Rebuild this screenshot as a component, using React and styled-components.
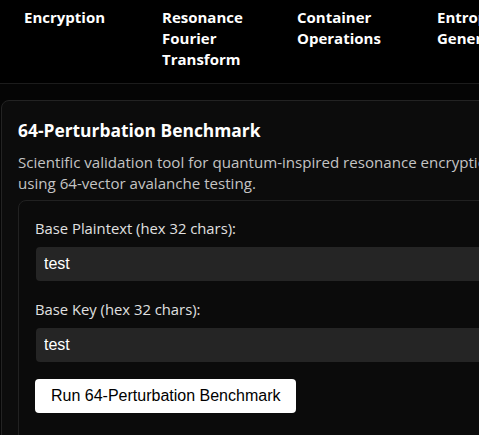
import React, { useState } from 'react';
import styled, { createGlobalStyle } from 'styled-components';

const GlobalStyle = createGlobalStyle`
    body {
        margin: 0;
        background-color: #050505;
        color: #fff;
        font-family: "Open Sans", "Noto Sans", sans-serif;
        overflow: hidden;
    }
`;

const Page = styled.div`
    width: 540px;
`;

const Nav = styled.nav`
    display: grid;
    grid-template-columns: 138px 135px 140px 140px;
    padding: 7px 0 13px 24px;
    background-color: #000;
    border-bottom: 1px solid #1c1c1c;
`;

const NavLink = styled.a`
    width: 110px;
    font-size: 15px;
    font-weight: 700;
    line-height: 21px;
    color: #fff;
    text-decoration: none;
    cursor: pointer;
`;

const Main = styled.main`
    padding: 16px 0 0 1px;
`;

const Card = styled.section`
    background-color: #0c0c0c;
    border: 1px solid #232323;
    border-radius: 8px;
    padding: 16px;
`;

const Title = styled.h2`
    margin: 0;
    font-size: 17.4px;
    font-weight: 700;
    line-height: 26px;
`;

const Description = styled.p`
    margin: 9px 0 6px;
    font-size: 15.1px;
    line-height: 21px;
    color: #c4c4c4;
`;

const Panel = styled.div`
    background-color: #0b0b0b;
    border: 1px solid #212121;
    border-radius: 8px;
    padding: 17px 16px 40px;
`;

const Field = styled.div`
    margin-bottom: ${(props) => props.last ? '17px' : '18px'};
`;

const Label = styled.label`
    display: block;
    font-size: 14.8px;
    line-height: 21px;
    color: #e0e0e0;
    margin-bottom: 8px;
`;

const Input = styled.input`
    display: block;
    box-sizing: border-box;
    width: 100%;
    height: 34px;
    margin-left: 1px;
    padding: 0 8px;
    border: none;
    border-radius: 4px;
    background-color: #252525;
    color: #fff;
    font-family: "Liberation Sans", Arial, sans-serif;
    font-size: 16px;
    outline: none;
`;

const Button = styled.button`
    height: 34px;
    padding: 0 16px;
    border: none;
    border-radius: 4px;
    background-color: #fff;
    color: #000;
    font-family: "Liberation Sans", Arial, sans-serif;
    font-size: 16px;
    cursor: pointer;
`;

const links = ['Encryption', 'Resonance Fourier Transform', 'Container Operations', 'Entropy Generation'];

const App = () => {
    const [plaintext, setPlaintext] = useState('test');
    const [key, setKey] = useState('test');

    return (
        <Page>
            <GlobalStyle />
            <Nav>
                {links.map((link) => (
                    <NavLink key={link}>{link}</NavLink>
                ))}
            </Nav>
            <Main>
                <Card>
                    <Title>64-Perturbation Benchmark</Title>
                    <Description>
                        Scientific validation tool for quantum-inspired resonance encryption
                        using 64-vector avalanche testing.
                    </Description>
                    <Panel>
                        <Field>
                            <Label>Base Plaintext (hex 32 chars):</Label>
                            <Input value={plaintext} onChange={(e) => setPlaintext(e.target.value)} />
                        </Field>
                        <Field last>
                            <Label>Base Key (hex 32 chars):</Label>
                            <Input value={key} onChange={(e) => setKey(e.target.value)} />
                        </Field>
                        <Button>Run 64-Perturbation Benchmark</Button>
                    </Panel>
                </Card>
            </Main>
        </Page>
    );
};

export default App;
